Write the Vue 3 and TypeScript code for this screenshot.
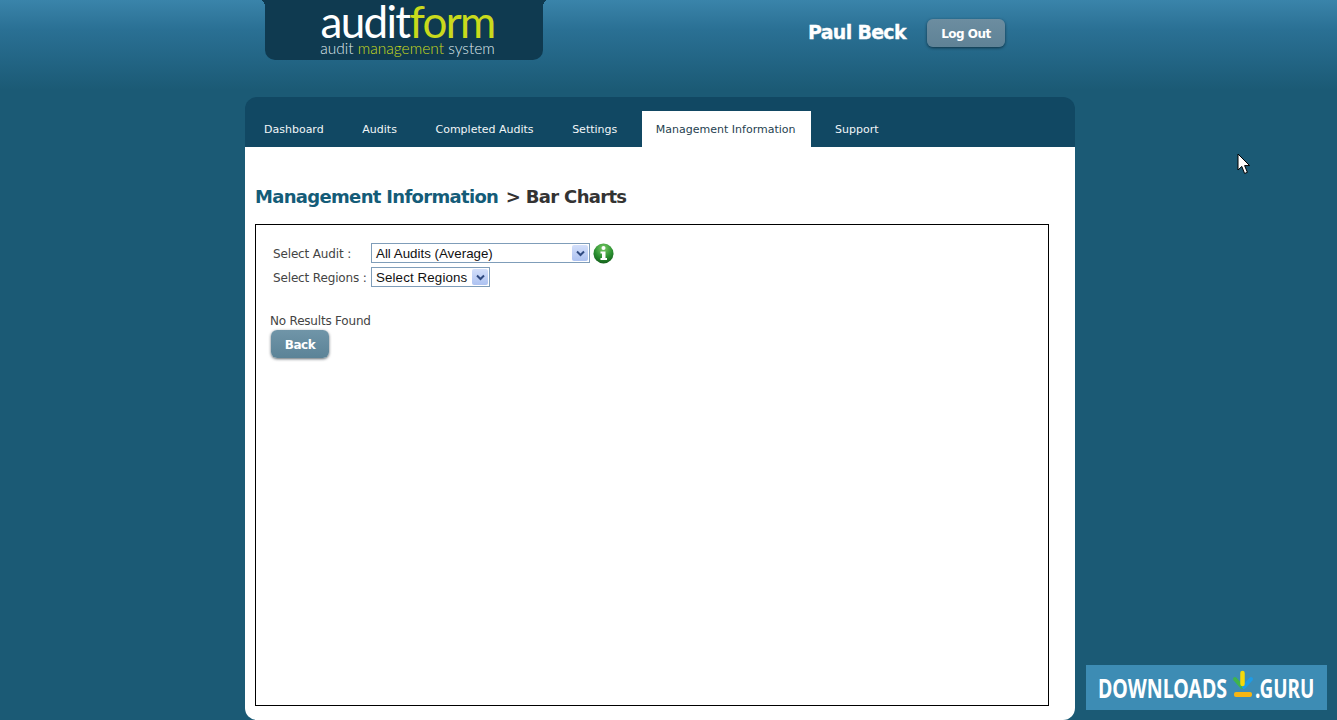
<script setup lang="ts">
const tabs = ['Dashboard', 'Audits', 'Completed Audits', 'Settings', 'Management Information', 'Support']
const activeTab = 'Management Information'
</script>

<template>
  <div class="page">
    <div class="wrap">
      <header class="header">
        <div class="logo">
          <div class="logo-main">audit<span class="lime">form</span></div>
          <div class="logo-sub">audit <span class="lime">management</span> system</div>
        </div>
        <div class="user">
          <span class="user-name">Paul Beck</span>
          <button class="btn logout">Log Out</button>
        </div>
      </header>

      <main class="panel">
        <nav class="tabs">
          <a v-for="t in tabs" :key="t" class="tab" :class="{ active: t === activeTab }">{{ t }}</a>
        </nav>
        <section class="content">
          <h1 class="title"><span class="title-link">Management Information</span> &gt; Bar Charts</h1>
          <div class="box">
            <div class="form-row first">
              <span class="label">Select Audit :</span>
              <div class="select wide">
                <span>All Audits (Average)</span>
                <span class="arrow">
                  <svg width="9" height="7" viewBox="0 0 9 7"><path d="M1 1.5 L4.5 5 L8 1.5" fill="none" stroke="#2f4a80" stroke-width="2" /></svg>
                </span>
              </div>
              <svg class="info" width="21" height="21" viewBox="0 0 21 21">
                <defs>
                  <radialGradient id="ig" cx="50%" cy="25%" r="75%">
                    <stop offset="0" stop-color="#7ccc68" />
                    <stop offset="0.6" stop-color="#2b9030" />
                    <stop offset="1" stop-color="#14601c" />
                  </radialGradient>
                </defs>
                <circle cx="10.5" cy="10.5" r="10" fill="url(#ig)" />
                <circle cx="10.5" cy="5" r="2" fill="#fff" />
                <path d="M7.5 8.5 H12.5 V15 H14 V17 H7.5 V15 H9 V10.5 H7.5 Z" fill="#fff" />
              </svg>
            </div>
            <div class="form-row">
              <span class="label">Select Regions :</span>
              <div class="select narrow">
                <span class="spaced">Select Regions</span>
                <span class="arrow">
                  <svg width="9" height="7" viewBox="0 0 9 7"><path d="M1 1.5 L4.5 5 L8 1.5" fill="none" stroke="#2f4a80" stroke-width="2" /></svg>
                </span>
              </div>
            </div>
            <p class="none">No Results Found</p>
            <button class="btn back">Back</button>
          </div>
        </section>
      </main>
    </div>

    <svg class="cursor" width="14" height="23" viewBox="0 0 14 23">
      <path d="M1 1 V17 L4.8 13.4 L7.6 20.5 L10.4 19.3 L7.6 12.6 H12.6 Z" fill="#fff" stroke="#000" stroke-width="1" />
    </svg>

    <div class="guru">
      <span class="guru-text">DOWNLOADS</span>
      <svg class="guru-icon" width="24" height="28" viewBox="0 0 24 28">
        <path d="M3 9 L10 17" fill="none" stroke="#3fb54a" stroke-width="4" stroke-linecap="round" />
        <path d="M19 9 L12 17" fill="none" stroke="#1f9be6" stroke-width="4" stroke-linecap="round" />
        <path d="M10.5 3 V14" fill="none" stroke="#f5d90a" stroke-width="4.5" stroke-linecap="round" />
        <rect x="2" y="22" width="18" height="5" rx="2" fill="#f7b512" />
      </svg>
      <span class="guru-text tld">.GURU</span>
    </div>
  </div>
</template>

<style>
html, body { margin: 0; height: 720px; overflow: hidden; background: #1b5a75; }
</style>

<style scoped>
.page {
  position: relative;
  height: 720px;
  overflow: hidden;
  background: linear-gradient(#3a84aa 0, #2a7094 30px, #1b5a75 90px, #1b5a75 100%);
  font-family: "DejaVu Sans", Verdana, sans-serif;
}
.wrap {
  width: 830px;
  margin-left: 245px;
}
.header {
  height: 97px;
  display: flex;
  align-items: flex-start;
}
.logo {
  position: relative;
  width: 278px;
  height: 60px;
  margin-left: 20px;
  background: #0f3a50;
  border-radius: 0 0 10px 10px;
  text-align: center;
  font-family: Lato, sans-serif;
  color: #fff;
  box-sizing: border-box;
  padding: 1px 0 0 7px;
}
.logo::before,
.logo::after {
  content: "";
  position: absolute;
  top: 0;
  width: 4px;
  height: 7px;
}
.logo::before {
  left: -4px;
  background: radial-gradient(ellipse 4px 7px at 0 100%, transparent 98%, #0f3a50 100%);
}
.logo::after {
  right: -4px;
  background: radial-gradient(ellipse 4px 7px at 100% 100%, transparent 98%, #0f3a50 100%);
}
.lime { color: #c9da1c; }
.logo-main {
  font-size: 44px;
  font-weight: 400;
  line-height: 40px;
  height: 40px;
  letter-spacing: -1.7px;
}
.logo-sub {
  font-size: 15.5px;
  font-weight: 300;
  line-height: 15px;
  color: #dfe8ec;
}
.user {
  margin-left: 265px;
  display: flex;
  align-items: center;
  height: 47px;
  padding-top: 19px;
  box-sizing: border-box;
}
.user-name {
  font-size: 19px;
  font-weight: 700;
  color: #fff;
  width: 119px;
  margin-bottom: 2px;
  letter-spacing: -0.7px;
  -webkit-text-stroke: 0.3px #fff;
}
.btn {
  border: 0;
  padding: 2px 0 0;
  display: block;
  color: #fff;
  font-family: "DejaVu Sans", Verdana, sans-serif;
  font-weight: 700;
  font-size: 12px;
  letter-spacing: -0.5px;
  border-radius: 6px;
  background: linear-gradient(#7095a8, #5b8397);
  box-shadow: 0 1px 3px rgba(0, 20, 30, 0.65);
}
.logout {
  width: 78px;
  height: 28px;
  background: linear-gradient(#6c8da0, #5f8296);
}
.panel {
  border-radius: 12px;
  overflow: hidden;
}
.tabs {
  height: 50px;
  background: #114863;
  box-sizing: border-box;
  padding-left: 5px;
  display: flex;
  align-items: flex-end;
}
.tab {
  height: 36px;
  line-height: 38px;
  padding: 0 14px;
  margin-right: 10.6px;
  font-size: 11px;
  color: #f2f6f8;
  white-space: nowrap;
}
.tab.active {
  background: #fff;
  color: #1f3f50;
  padding-right: 15px;
}
.content {
  background: #fff;
  height: 573px;
  box-sizing: border-box;
  padding: 36px 26px 0 10px;
}
.title {
  margin: 0;
  height: 41px;
  font-size: 18px;
  line-height: 27px;
  font-weight: 700;
  color: #333;
  letter-spacing: -0.68px;
}
.title-link {
  color: #145c78;
  margin-right: 2px;
}
.box {
  height: 482px;
  box-sizing: border-box;
  border: 1px solid #000;
  padding: 18px 0 0 14px;
}
.form-row {
  display: flex;
  align-items: center;
  height: 20px;
  margin-bottom: 4px;
  padding-left: 3px;
}
.label {
  width: 98px;
  flex: none;
  margin-top: 2px;
  font-size: 12px;
  letter-spacing: -0.15px;
  color: #444;
  white-space: nowrap;
}
.select {
  height: 20px;
  box-sizing: border-box;
  border: 1px solid #7f9db9;
  background: #fff;
  display: flex;
  align-items: center;
  justify-content: space-between;
  padding: 0 1px 0 4px;
  font-family: "Liberation Sans", Arial, sans-serif;
  font-size: 13.33px;
  color: #111;
}
.spaced { letter-spacing: 0.12px; }
.select.wide { width: 219px; }
.select.narrow { width: 119px; }
.arrow {
  width: 16px;
  height: 16px;
  border-radius: 2px;
  background: linear-gradient(#d3dffa, #adc2f1);
  display: flex;
  align-items: center;
  justify-content: center;
}
.info { margin-left: 3px; flex: none; }
.none {
  margin: 25px 0 0;
  font-size: 12px;
  line-height: 19px;
  letter-spacing: -0.2px;
  color: #444;
}
.back {
  margin: -1px 0 0 1px;
  width: 58px;
  height: 28px;
}
.cursor {
  position: absolute;
  left: 1237px;
  top: 153px;
}
.guru {
  position: absolute;
  left: 1086px;
  top: 665px;
  width: 241px;
  height: 45px;
  background: #3d8cb4;
  display: flex;
  align-items: center;
  box-sizing: border-box;
  padding-left: 12px;
  color: #fff;
}
.guru-text {
  font-family: "Noto Sans", sans-serif;
  font-weight: 700;
  font-size: 26px;
  display: inline-block;
  transform: scaleX(0.755);
  transform-origin: left center;
  width: 134px;
  white-space: nowrap;
}
.tld {
  width: 66px;
  transform: scaleX(0.73);
}
.guru-icon {
  flex: none;
  margin: -7px -1px 0 0;
}
</style>
